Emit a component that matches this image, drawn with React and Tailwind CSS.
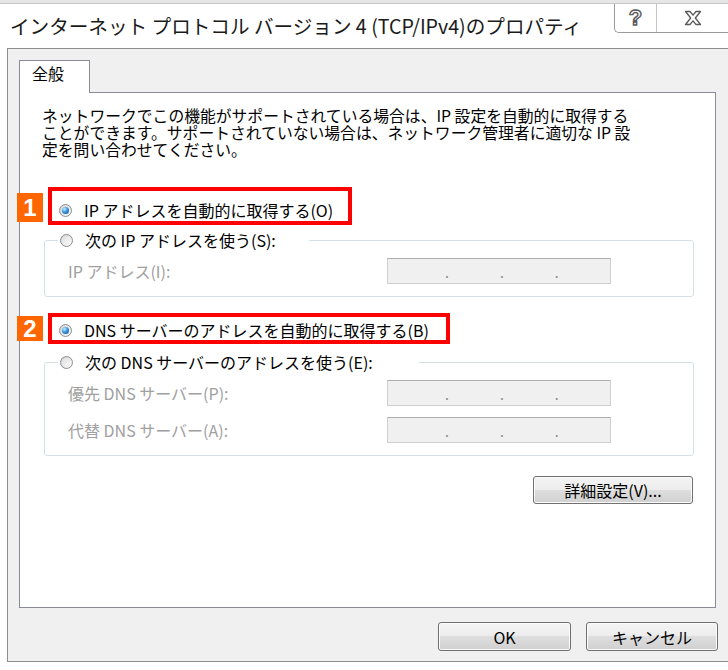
import React from 'react';

const jp = "font-['Noto_Sans_CJK_JP','Noto_Sans_CJK_SC',sans-serif]";

function Radio({ checked }) {
  return (
    <span className="flex h-[13px] w-[13px] shrink-0 items-center justify-center rounded-full border border-[#8e8f8f] bg-[linear-gradient(135deg,#cfcfcf,#fbfbfb)]">
      {checked ? (
        <span className="h-[7px] w-[7px] rounded-full bg-[radial-gradient(circle_at_35%_30%,#c4f0ff_0%,#3b95de_45%,#0b4a87_100%)]" />
      ) : (
        <span className="h-[9px] w-[9px] rounded-full bg-[linear-gradient(135deg,#dedede,#fbfbfb)]" />
      )}
    </span>
  );
}

function IpBox() {
  return (
    <div className="flex h-[26px] w-[224px] items-end gap-[51px] border border-[#cfcfcf] border-t-[#acacac] bg-[#f0f0f0] pb-[4px] pl-[57px] text-[14px] leading-none text-[#8a8a8a]">
      <span>.</span>
      <span>.</span>
      <span>.</span>
    </div>
  );
}

function FieldRow({ label, mt }) {
  return (
    <div className={`flex h-[26px] items-center pl-[23px] ${mt}`}>
      <span className="w-[319px] text-[#a0a0a0]">{label}</span>
      <IpBox />
    </div>
  );
}

function WinButton({ children, className }) {
  return (
    <button className={`rounded-[3px] border border-[#707070] bg-[linear-gradient(to_bottom,#f4f4f4_0%,#ececec_50%,#dedede_50%,#d0d0d0_100%)] text-[16px] text-black shadow-[inset_0_0_0_1px_#fbfbfb] ${className}`}>
      {children}
    </button>
  );
}

function Badge({ n, className }) {
  return (
    <span className={`absolute left-[-35px] flex w-[26px] items-center justify-center bg-[#ff6600] font-['Liberation_Sans',sans-serif] text-[24px] font-bold leading-none text-white ${className}`}>
      {n}
    </span>
  );
}

const lines = [
  'ネットワークでこの機能がサポートされている場合は、IP 設定を自動的に取得する',
  'ことができます。サポートされていない場合は、ネットワーク管理者に適切な IP 設',
  '定を問い合わせてください。',
];

export default function App() {
  return (
    <div className={`relative h-[670px] w-[728px] overflow-hidden bg-white text-[16px] text-black ${jp}`}>
      {/* window behind */}
      <div className="h-[4px] border-b border-[#c8c8c8] bg-[#e6e6e6]" />

      {/* title bar */}
      <div className="flex h-[44px] items-start">
        <div className="pl-[10px] pt-[10px] text-[19.6px] leading-[24px] text-[#1a1a1a]">
          インターネット プロトコル バージョン 4 (TCP/IPv4)のプロパティ
        </div>
        <div className="ml-auto flex h-[29px] w-[114px] rounded-bl-[5px] border-b border-l border-[#9a9a9a] bg-white">
          <div className="flex w-[42px] items-center justify-center border-r border-[#c4c4c4] font-['Liberation_Sans',sans-serif] text-[22px] font-bold leading-none text-white [-webkit-text-stroke:1.4px_#5a5a5a]">
            ?
          </div>
          <div className="flex flex-1 items-center justify-center">
            <svg width="18" height="16" viewBox="0 0 18 16">
              <path
                d="M1.5 1.5H6L9 5.2L12 1.5H16.5L11.3 8L16.5 14.5H12L9 10.8L6 14.5H1.5L6.7 8Z"
                fill="#fff"
                stroke="#5a5a5a"
                strokeWidth="1.3"
                strokeLinejoin="round"
              />
            </svg>
          </div>
        </div>
      </div>

      {/* dialog body */}
      <div className="ml-[7px] flex h-[614px] flex-col border-b border-l border-t border-[#8d8d8d] bg-[#f0f0f0] pl-[11px] pt-[11px]">
        <div className="relative z-10 -mb-[1px] h-[33px] w-[71px] border-l border-r border-t border-[#898c95] bg-white pl-[12px] pt-[2px] leading-[20px]">
          全般
        </div>

        <div className="flex h-[516px] w-[697px] flex-col border border-[#898c95] bg-white">
          <div className="flex flex-col pl-[22px] pt-[14px] text-[15.8px]">
            {lines.map((t) => (
              <div key={t} className="h-[17px] leading-[17px] whitespace-nowrap">
                {t}
              </div>
            ))}
          </div>

          {/* 1 */}
          <div className="relative ml-[28px] mt-[29px] h-[38px] w-[304px] border-4 border-[#ff0000] pl-[7px] pt-[8px]">
            <Badge n="1" className="top-[2px] h-[29px]" />
            <div className="flex h-[22px] items-center gap-[12px]">
              <Radio checked />
              <span>IP アドレスを自動的に取得する(O)</span>
            </div>
          </div>

          <div className="ml-[24px] mt-[15px] flex w-[650px] flex-col rounded-[3px] border border-[#d5dfe5] pb-[12px]">
            <div className="-mt-[12px] ml-[13px] flex h-[22px] w-[251px] items-center gap-[12px] bg-white pl-[2px]">
              <Radio />
              <span>次の IP アドレスを使う(S):</span>
            </div>
            <FieldRow label="IP アドレス(I):" mt="mt-[7px]" />
          </div>

          {/* 2 */}
          <div className="relative ml-[28px] mt-[16px] h-[31px] w-[402px] border-4 border-[#ff0000] pl-[7px] pt-[3px]">
            <Badge n="2" className="top-[-1px] h-[25px]" />
            <div className="flex h-[20px] items-center gap-[12px]">
              <Radio checked />
              <span>DNS サーバーのアドレスを自動的に取得する(B)</span>
            </div>
          </div>

          <div className="ml-[24px] mt-[18px] flex w-[650px] flex-col rounded-[3px] border border-[#d5dfe5] pb-[12px]">
            <div className="-mt-[12px] ml-[13px] flex h-[22px] w-[361px] items-center gap-[12px] bg-white pl-[2px]">
              <Radio />
              <span>次の DNS サーバーのアドレスを使う(E):</span>
            </div>
            <FieldRow label="優先 DNS サーバー(P):" mt="mt-[7px]" />
            <FieldRow label="代替 DNS サーバー(A):" mt="mt-[11px]" />
          </div>

          <div className="mr-[22px] mt-[20px] flex justify-end">
            <WinButton className="h-[28px] w-[160px]">詳細設定(V)...</WinButton>
          </div>
        </div>

        <div className="mt-[14px] flex justify-end gap-[15px] pr-[10px]">
          <WinButton className="h-[29px] w-[133px]">OK</WinButton>
          <WinButton className="h-[29px] w-[132px]">キャンセル</WinButton>
        </div>
      </div>
    </div>
  );
}
